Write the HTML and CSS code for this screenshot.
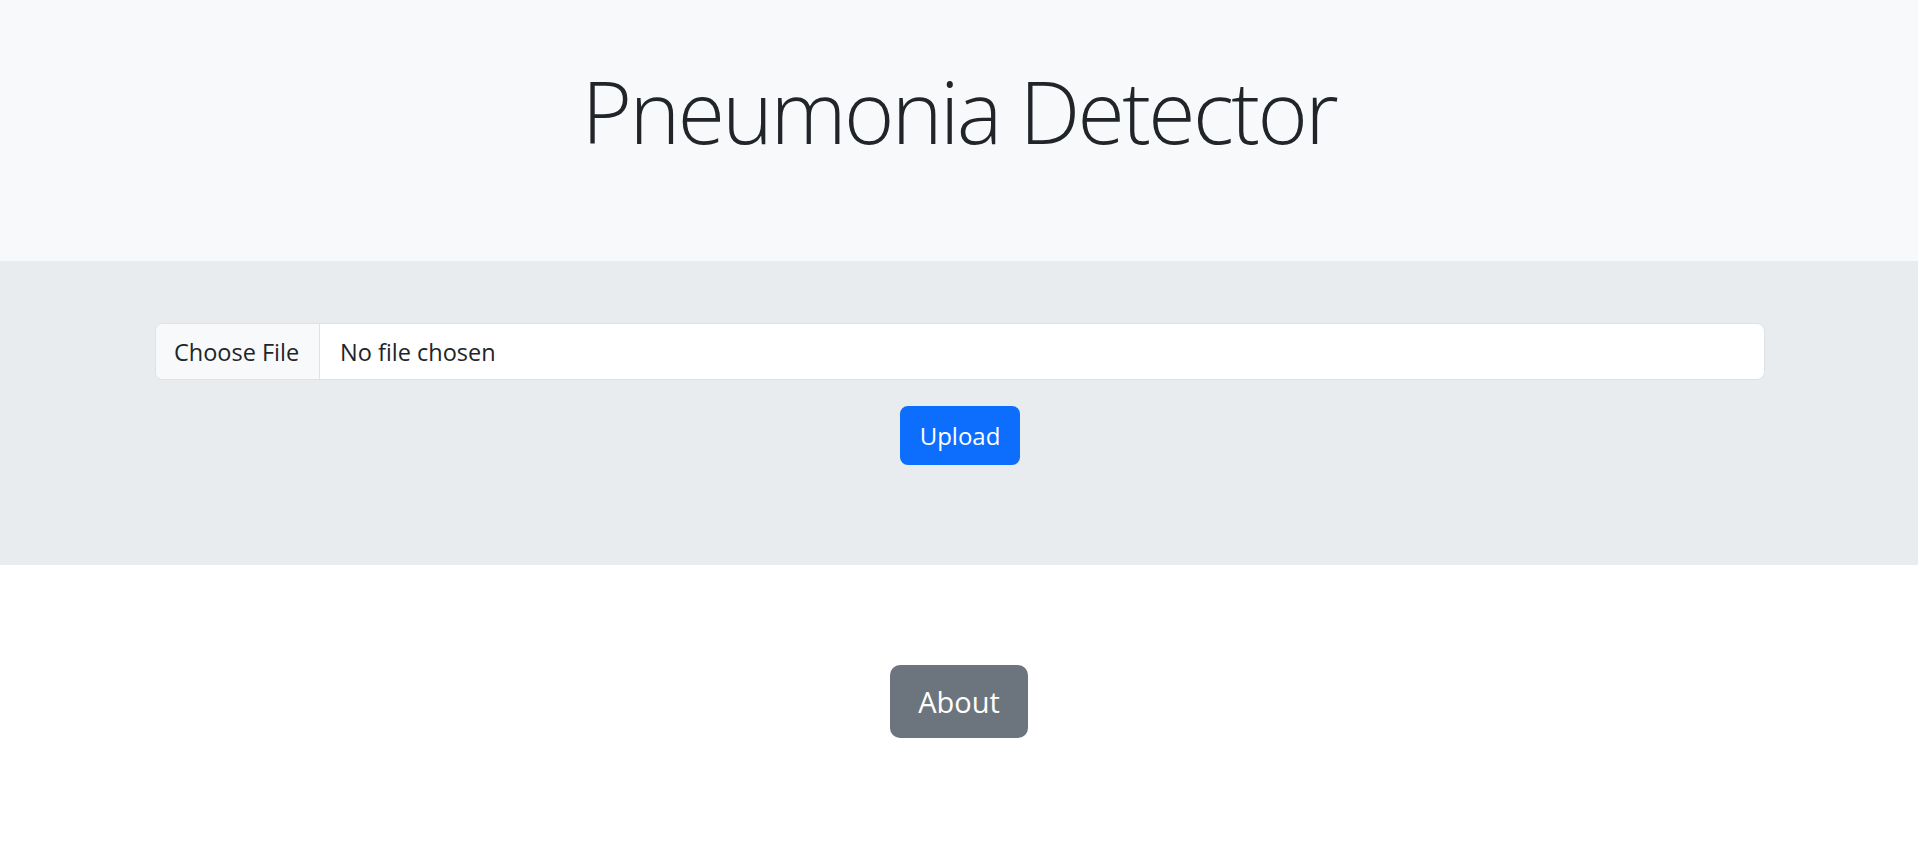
FILE: index.html
```html
<!DOCTYPE html>
<html lang="en">
<head>
<meta charset="utf-8">
<title>Pneumonia Detector</title>
<link rel="stylesheet" href="styles.css">
</head>
<body>
  <header class="hero">
    <h1 class="title">Pneumonia Detector</h1>
  </header>
  <section class="upload-band">
    <form class="upload-form">
      <div class="file-field">
        <span class="file-button">Choose File</span>
        <span class="file-name">No file chosen</span>
      </div>
      <button type="button" class="btn btn-primary">Upload</button>
    </form>
  </section>
  <section class="about-band">
    <a class="btn btn-secondary" href="#">About</a>
  </section>
</body>
</html>
```
FILE: styles.css
```css
* { box-sizing: border-box; }
html, body { margin: 0; padding: 0; }
body {
  font-family: "Open Sans", "Noto Sans", "Liberation Sans", sans-serif;
  color: #212529;
  background: #ffffff;
  width: 1918px;
  height: 852px;
  overflow: hidden;
}
.hero {
  background: #f8f9fa;
  height: 261px;
  display: flex;
  justify-content: center;
  padding-top: 59px;
}
.title {
  margin: 0;
  font-weight: 300;
  font-size: 86px;
  line-height: 1.2;
  letter-spacing: -2.6px;
}
.upload-band {
  background: #e9ecef;
  height: 304px;
  padding: 62px 153px 0 155px;
}
.upload-form {
  display: flex;
  flex-direction: column;
  align-items: center;
  gap: 26px;
}
.file-field {
  width: 100%;
  height: 57px;
  display: flex;
  align-items: center;
  background: #ffffff;
  border: 1px solid #dee2e6;
  border-radius: 8px;
  overflow: hidden;
  font-size: 23.5px;
}
.file-button {
  height: 100%;
  display: flex;
  align-items: center;
  padding: 0 18px;
  background: #f8f9fa;
  border-right: 1px solid #dee2e6;
  width: 164px;
  white-space: nowrap;
}
.file-name {
  padding-left: 20px;
}
.btn {
  display: inline-flex;
  align-items: center;
  justify-content: center;
  border: none;
  color: #ffffff;
  font-family: inherit;
  text-decoration: none;
  cursor: pointer;
}
.btn-primary {
  background: #0d6efd;
  width: 120px;
  height: 59px;
  border-radius: 8px;
  font-size: 24px;
}
.about-band {
  display: flex;
  justify-content: center;
  padding-top: 100px;
}
.btn-secondary {
  background: #6c757d;
  width: 138px;
  height: 73px;
  border-radius: 10px;
  font-size: 29px;
}
```
